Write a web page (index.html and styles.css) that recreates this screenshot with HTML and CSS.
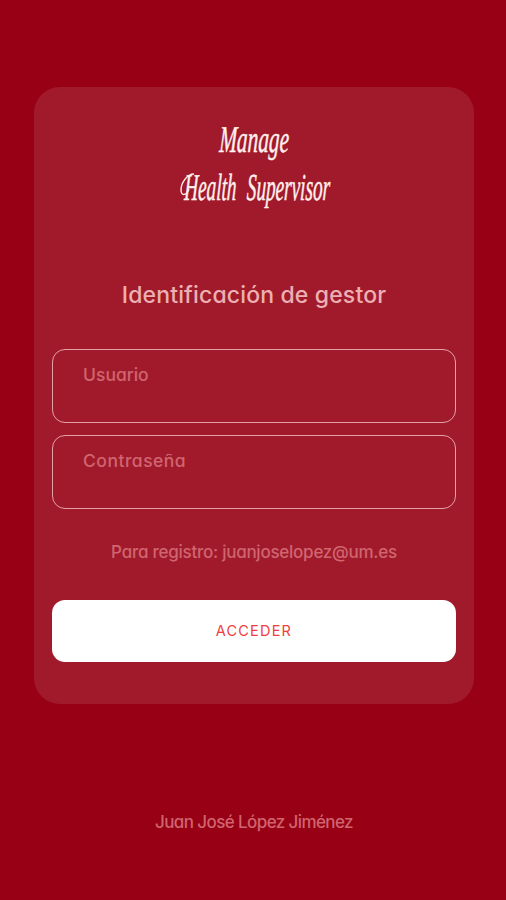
FILE: index.html
```html
<!DOCTYPE html>
<html lang="es">
<head>
<meta charset="utf-8">
<title>Manage Health Supervisor</title>
<link rel="stylesheet" href="styles.css">
</head>
<body>
<main class="card">
  <h1 class="brand">
    <span class="brand-row"><span class="brand-line">Manage</span></span>
    <span class="brand-row"><svg class="swash" viewBox="0 0 16 26" aria-hidden="true"><path d="M14 2C7 2 1 11 1 18c0 7 6 5 8-1"/></svg><span class="brand-line brand-wide">Health Supervisor</span></span>
  </h1>
  <h2 class="heading">Identificación de gestor</h2>
  <form class="form">
    <label class="field"><span class="user-label">Usuario</span></label>
    <label class="field"><span class="pass-label">Contraseña</span></label>
    <p class="hint">Para registro: juanjoselopez@um.es</p>
    <button class="submit" type="button">ACCEDER</button>
  </form>
</main>
<footer class="footer">Juan José López Jiménez</footer>
</body>
</html>
```
FILE: styles.css
```css
* { box-sizing: border-box; }
body {
  margin: 0;
  height: 900px;
  padding: 87px 32px 0 34px;
  background: #970015;
  font-family: Inter, "Noto Sans", sans-serif;
  font-feature-settings: "cv11";
  color: #d0656f;
  overflow: hidden;
}
.card {
  height: 617px;
  padding: 28px 18px 0;
  border-radius: 26px;
  background: #a11a2c;
}
.brand {
  display: flex;
  flex-direction: column;
  align-items: center;
  margin: 0;
  height: 96px;
  color: #fff0ed;
  font: italic 400 38px/48px "Liberation Serif", serif;
}
.brand-row {
  position: relative;
  display: flex;
  justify-content: center;
  width: 150px;
  height: 48px;
}
.brand-line {
  white-space: nowrap;
  -webkit-text-stroke: .5px #fff0ed;
  transform: scaleX(.56) skewX(-4deg);
}
.brand-wide {
  word-spacing: 11px;
  transform: translateX(3px) scaleX(.505) skewX(-4deg);
}
.swash {
  position: absolute;
  left: 1px;
  top: 9px;
  width: 16px;
  height: 26px;
  fill: none;
  stroke: #fff0ed;
  stroke-width: 1.4;
}
.heading {
  margin: 66px 0 0;
  color: #ecb0b2;
  font-size: 23px;
  font-weight: 500;
  line-height: 36px;
  letter-spacing: .15px;
  text-align: center;
  white-space: nowrap;
}
.form {
  display: flex;
  flex-direction: column;
  margin-top: 36px;
}
.field {
  height: 74px;
  margin-bottom: 12px;
  padding: 12px 30px;
  border: 1.5px solid #e3a1a6;
  border-radius: 13px;
  font-size: 17.5px;
  font-weight: 500;
  line-height: 26px;
}
.pass-label { letter-spacing: .5px; }
.hint {
  margin: 18px 0 0;
  font-size: 17px;
  font-weight: 500;
  line-height: 26px;
  letter-spacing: -.25px;
  text-align: center;
  white-space: nowrap;
}
.submit {
  height: 62px;
  margin: 35px 0 0;
  padding: 0;
  border: 0;
  border-radius: 13px;
  background: #fff;
  color: #ef3e42;
  font: 400 14.5px/24px Inter, sans-serif;
  letter-spacing: 1.2px;
}
.footer {
  margin-top: 105px;
  font-size: 17px;
  font-weight: 500;
  line-height: 26px;
  letter-spacing: -.6px;
  text-align: center;
}
```
